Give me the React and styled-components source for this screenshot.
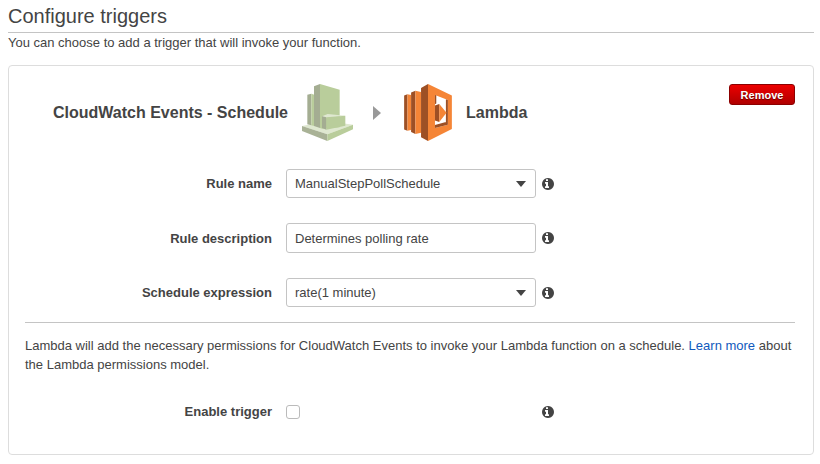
import { useState } from 'react';
import styled, { createGlobalStyle } from 'styled-components';

const GlobalStyle = createGlobalStyle`
  * {
    box-sizing: border-box;
  }
  body {
    margin: 0;
    background: #fff;
    color: #444;
    font-family: "Liberation Sans", Arial, Helvetica, sans-serif;
    font-size: 13px;
    line-height: 19px;
  }
`;

const Page = styled.main`
  padding: 0 6px 8px 8px;
`;

const Title = styled.h1`
  margin: 0;
  height: 33px;
  border-bottom: 1px solid #c4c4c4;
  font-size: 20px;
  font-weight: normal;
  line-height: 32px;
`;

const Intro = styled.p`
  margin: 0 0 13px;
`;

const Card = styled.section`
  padding: 18px 18px 33px 16px;
  border: 1px solid #ddd;
  border-radius: 4px;
`;

const CardHeader = styled.div`
  display: flex;
  justify-content: space-between;
  align-items: flex-start;
  padding-left: 28px;
`;

const Flow = styled.div`
  display: flex;
  align-items: center;
  gap: 14px;
`;

const Service = styled.h2`
  margin: 0;
  font-size: 16px;
  line-height: 20px;
`;

const Arrow = styled.span`
  margin: 0 9px 0 6px;
  border: 7px solid transparent;
  border-left: 8px solid #999;
  border-right: 0;
`;

const RemoveButton = styled.button`
  width: 66px;
  height: 21px;
  padding: 0;
  border: 1px solid #8c0000;
  border-radius: 3px;
  background: linear-gradient(#ec0000, #b00000);
  color: #fff;
  font: bold 11px "Liberation Sans", Arial, sans-serif;
  text-shadow: 0 1px 1px #600;
  cursor: pointer;
`;

const Fields = styled.div`
  display: grid;
  gap: 25px;
  padding: 28px 0 15px;
`;

const Row = styled.div`
  display: grid;
  grid-template-columns: 261px 250px auto;
  justify-content: start;
  align-items: center;
`;

const Label = styled.label`
  padding-right: 14px;
  font-weight: bold;
  text-align: right;
`;

const TextInput = styled.input`
  width: 100%;
  height: 30px;
  padding: 0 8px;
  border: 1px solid #c4c4c4;
  border-radius: 3px;
  background: #fff;
  color: #444;
  font: inherit;
`;

const SelectBox = styled.div`
  display: grid;
  align-items: center;

  > * {
    grid-area: 1 / 1;
  }
`;

const Select = styled(TextInput).attrs({ as: 'select' })`
  height: 29px;
  appearance: none;
`;

const Caret = styled.span`
  justify-self: end;
  margin-right: 10px;
  border: 5px solid transparent;
  border-top: 6px solid #444;
  border-bottom: 0;
  pointer-events: none;
`;

const InfoButton = styled.button`
  display: flex;
  margin-left: 6px;
  padding: 0;
  border: 0;
  background: none;
  color: #444;
`;

const Checkbox = styled.input`
  width: 14px;
  height: 14px;
  margin: 0;
  border: 1px solid #bbb;
  border-radius: 3px;
  background: #fff;
  appearance: none;

  &:checked {
    background: #444;
    box-shadow: inset 0 0 0 2px #fff;
  }
`;

const Note = styled.p`
  margin: 0 0 28px;
  padding-top: 13px;
  border-top: 1px solid #c4c4c4;
`;

const Link = styled.a`
  color: #0f59bd;
  text-decoration: none;
`;

const CloudWatchIcon = () => (
  <svg width="51" height="57" viewBox="21 17 153 171" aria-hidden="true">
    <path fill="#dfe8d0" d="M21 143 97 128 174 139 97 168Z" />
    <path fill="#a9b296" d="M21 143 97 168V188L21 158Z" />
    <path fill="#b9cd9b" d="M174 139 97 168V188L174 153Z" />
    <path fill="#a4ad92" d="M37 49 49 46V141L37 138Z" />
    <path fill="#b9cd9b" d="M49 46 58 49V143L49 141Z" />
    <path fill="#a4ad92" d="M57 24 75 17V149L57 143Z" />
    <path fill="#b9cd9b" d="M75 17 134 34V147L82 151 75 149Z" />
    <path fill="#dfe8d0" d="M81 114 98 107 151 112 92 120Z" />
    <path fill="#a4ad92" d="M81 114 94 117V154L81 149Z" />
    <path fill="#b9cd9b" d="M94 117 151 112V142L94 154Z" />
  </svg>
);

const LambdaIcon = () => (
  <svg width="48" height="57" viewBox="117 17 144 172" aria-hidden="true">
    <path fill="#9d5025" d="M117 52 127 48V158L117 154Z" />
    <path fill="#f58536" d="M127 48 138 50V156L127 158Z" />
    <path fill="#9d5025" d="M138 43 151 37V168L138 162Z" />
    <path fill="#f58536" d="M151 37 168 41V164L151 168Z" />
    <path fill="#9d5025" d="M168 29 189 17V189L168 178Z" />
    <path
      fill="#f58536"
      fillRule="evenodd"
      d="M189 17 261 52V153L189 189ZM210 50V150L249 140V65Z"
    />
    <path fill="#9d5025" d="M210 50 214 51V76L210 78ZM210 141 243 132 249 140 210 150ZM243 63 249 65V140L243 133Z" />
    <path fill="#9d5025" d="M210 82 223 77V132L210 127Z" />
    <path fill="#f58536" d="M223 77 245 104 223 132Z" />
  </svg>
);

const Info = ({ about }) => (
  <InfoButton type="button" aria-label={`About ${about}`}>
    <svg width="12" height="12" viewBox="128 128 1536 1536" fill="currentColor">
      <path d="M1024 1376v-160q0-14-9-23t-23-9h-96v-512q0-14-9-23t-23-9h-320q-14 0-23 9t-9 23v160q0 14 9 23t23 9h96v320h-96q-14 0-23 9t-9 23v160q0 14 9 23t23 9h448q14 0 23-9t9-23zM896 480v-160q0-14-9-23t-23-9h-192q-14 0-23 9t-9 23v160q0 14 9 23t23 9h192q14 0 23-9t9-23zM1664 896q0 209-103 385.5t-279.5 279.5-385.5 103-385.5-103-279.5-279.5-103-385.5 103-385.5 279.5-279.5 385.5-103 385.5 103 279.5 279.5 103 385.5z" />
    </svg>
  </InfoButton>
);

const Field = ({ id, label, children }) => (
  <Row>
    <Label htmlFor={id}>{label}</Label>
    {children}
    <Info about={label} />
  </Row>
);

const Dropdown = ({ id, options }) => (
  <SelectBox>
    <Select id={id}>
      {options.map((option) => (
        <option key={option}>{option}</option>
      ))}
    </Select>
    <Caret />
  </SelectBox>
);

export default function App() {
  const [description, setDescription] = useState('Determines polling rate');
  const [enabled, setEnabled] = useState(false);

  return (
    <Page>
      <GlobalStyle />
      <Title>Configure triggers</Title>
      <Intro>You can choose to add a trigger that will invoke your function.</Intro>
      <Card>
        <CardHeader>
          <Flow>
            <Service>CloudWatch Events - Schedule</Service>
            <CloudWatchIcon />
            <Arrow />
            <LambdaIcon />
            <Service>Lambda</Service>
          </Flow>
          <RemoveButton type="button">Remove</RemoveButton>
        </CardHeader>
        <Fields>
          <Field id="rule-name" label="Rule name">
            <Dropdown id="rule-name" options={['ManualStepPollSchedule']} />
          </Field>
          <Field id="rule-description" label="Rule description">
            <TextInput
              id="rule-description"
              value={description}
              onChange={(e) => setDescription(e.target.value)}
            />
          </Field>
          <Field id="schedule" label="Schedule expression">
            <Dropdown id="schedule" options={['rate(1 minute)']} />
          </Field>
        </Fields>
        <Note>
          Lambda will add the necessary permissions for CloudWatch Events to invoke your Lambda function on a
          schedule. <Link href="#permissions">Learn more</Link> about the Lambda permissions model.
        </Note>
        <Field id="enable" label="Enable trigger">
          <Checkbox
            id="enable"
            type="checkbox"
            checked={enabled}
            onChange={(e) => setEnabled(e.target.checked)}
          />
        </Field>
      </Card>
    </Page>
  );
}
